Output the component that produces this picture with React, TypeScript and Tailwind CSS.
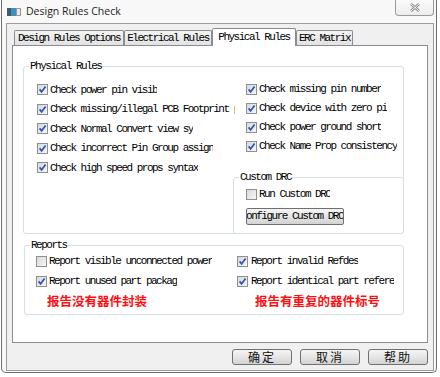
import React from "react";

const mono = "font-['Liberation_Mono','Courier_New',monospace] text-[11px] tracking-[-1.5px] text-black whitespace-nowrap";
const cjk = "font-['Noto_Sans_CJK_SC',sans-serif]";

function Box({ on }: { on?: boolean }) {
  return (
    <span className="flex h-[11px] w-[11px] shrink-0 items-center justify-center border border-[#8e8f8f] bg-white">
      <span className="flex h-[9px] w-[9px] items-center justify-center bg-gradient-to-br from-[#d6d9de] to-[#f7f7f7]">
        {on && (
          <svg width="9" height="9" viewBox="0 0 9 9">
            <path d="M1.6 4.4 L3.6 6.8 L7.6 1.4" fill="none" stroke="#2f56b0" strokeWidth="1.7" />
          </svg>
        )}
      </span>
    </span>
  );
}

function Check({ on, text, h, gap = "gap-[2px]", clip }: { on?: boolean; text: string; h: string; gap?: string; clip?: string }) {
  return (
    <div className={`flex items-center ${h} ${gap}`}>
      <Box on={on} />
      <span className={`${mono} overflow-hidden ${clip ?? ""}`}>{text}</span>
    </div>
  );
}

function Legend({ children }: { children: React.ReactNode }) {
  return (
    <span className={`-mt-[6px] ml-[5px] block h-[11px] w-fit bg-white px-[1px] leading-[11px] ${mono}`}>{children}</span>
  );
}

function Tab({ label, w, active }: { label: string; w: string; active?: boolean }) {
  if (active) {
    return (
      <div className={`${w} flex h-[18px] items-start justify-center rounded-t-[2px] border border-b-0 border-[#898c95] bg-white pt-[2px] leading-[13px] ${mono}`}>
        {label}
      </div>
    );
  }
  return (
    <div className={`${w} mb-px flex h-[15px] items-center justify-center rounded-t-[2px] border border-b-0 border-[#898c95] bg-gradient-to-b from-[#f4f4f4] to-[#e2e2e2] ${mono}`}>
      {label}
    </div>
  );
}

function Btn({ label }: { label: string }) {
  return (
    <button className={`flex h-[16px] w-[60px] items-center justify-center rounded-[3px] border border-[#707070] bg-gradient-to-b from-[#f4f4f4] via-[#e6e6e6] to-[#d2d2d2] text-[12px] leading-none tracking-[2px] text-[#111] ${cjk}`}>
      {label}
    </button>
  );
}

export default function App() {
  return (
    <div className="h-[377px] w-[440px] overflow-hidden bg-white">
      <div className="ml-px flex h-[373px] w-[436px] flex-col rounded-b-[5px] border-x border-b border-[#6f6f6f] bg-[#f8f8f8]">
        {/* title bar */}
        <div className="flex h-[23px] items-start">
          <svg className="ml-[5px] mt-[8px]" width="14" height="8" viewBox="0 0 14 8">
            <rect x="0" y="0" width="4" height="8" fill="#3f5d72" />
            <rect x="4" y="0" width="5" height="8" fill="#3d93b4" />
            <rect x="9.5" y="0.5" width="4" height="7" fill="#e6e6e6" stroke="#9a9a9a" />
          </svg>
          <span className="ml-[5px] mt-[4px] font-['Open_Sans',sans-serif] text-[10.5px] leading-[14px] text-[#1e1e1e]">
            Design Rules Check
          </span>
          <div className="ml-auto mr-[2px] flex h-[16px] w-[39px] items-center justify-center rounded-b-[4px] border border-t-0 border-[#9a9a9a] bg-gradient-to-b from-[#fbfbfb] to-[#ececec]">
            <svg width="10" height="9" viewBox="0 0 10 9">
              <path d="M1 1 L9 8 M9 1 L1 8" stroke="#8c8c8c" strokeWidth="2.6" />
              <path d="M1 1 L9 8 M9 1 L1 8" stroke="#f2f2f2" strokeWidth="1" />
            </svg>
          </div>
        </div>

        {/* client area */}
        <div className="ml-[4px] flex h-[348px] w-[428px] flex-col border border-[#9c9c9c] bg-[#f0f0f0]">
          <div className="relative z-10 -mb-px ml-[7px] mt-[4px] flex h-[18px] items-end">
            <Tab label="Design Rules Options" w="w-[110px]" />
            <Tab label="Electrical Rules" w="w-[88px]" />
            <Tab label="Physical Rules" w="w-[84px]" active />
            <Tab label="ERC Matrix" w="w-[57px]" />
          </div>

          <div className="ml-[5px] flex h-[298px] w-[416px] flex-col border border-[#898c95] bg-white">
            {/* Physical Rules */}
            <div className="ml-[10px] mt-[20px] flex h-[168px] w-[381px] flex-col rounded-[3px] border border-[#d5dfe5]">
              <Legend>Physical Rules</Legend>
              <div className="mt-[8px] flex flex-1">
                <div className="w-[222px] shrink-0 pl-[13px]">
                  <Check on text="Check power pin visib" h="h-[19.5px]" />
                  <Check on text="Check missing/illegal PCB Footprint p" h="h-[19.5px]" clip="w-[185px]" />
                  <Check on text="Check Normal Convert view sy" h="h-[19.5px]" />
                  <Check on text="Check incorrect Pin Group assign" h="h-[19.5px]" />
                  <Check on text="Check high speed props syntax" h="h-[19.5px]" />
                </div>
                <div className="flex flex-1 flex-col">
                  <Check on text="Check missing pin number" h="h-[19px]" />
                  <Check on text="Check device with zero pi" h="h-[19px]" />
                  <Check on text="Check power ground short" h="h-[19px]" />
                  <Check on text="Check Name Prop consistency" h="h-[19px]" />
                  {/* Custom DRC */}
                  <div className="-mb-px -mr-px -ml-[13px] mt-auto flex h-[57px] flex-col rounded-[3px] border border-[#d5dfe5]">
                    <Legend>Custom DRC</Legend>
                    <div className="ml-[12px] mt-[2px]">
                      <Check text="Run Custom DRC" h="h-[19px]" />
                    </div>
                    <button className={`ml-[12px] mt-[4px] flex h-[17px] w-[98px] items-center justify-end overflow-hidden rounded-[2px] border border-[#707070] bg-gradient-to-b from-[#f4f4f4] via-[#e6e6e6] to-[#d2d2d2] ${mono}`}>
                      <span className="-ml-[6px] shrink-0">Configure Custom DRC</span>
                    </button>
                  </div>
                </div>
              </div>
            </div>

            {/* Reports */}
            <div className="ml-[11px] mt-[11px] flex h-[70px] w-[380px] flex-col rounded-[3px] border border-[#d5dfe5]">
              <Legend>Reports</Legend>
              <div className="flex">
                <div className="w-[212px] pl-[11px]">
                  <Check text="Report visible unconnected power" h="h-[20px]" />
                  <Check on text="Report unused part packag" h="h-[20px]" />
                  <div className={`ml-[11px] flex h-[20px] items-center text-[12.5px] font-bold text-[#ff1010] ${cjk}`}>
                    报告没有器件封装
                  </div>
                </div>
                <div className="flex-1">
                  <Check on text="Report invalid Refdes" h="h-[20px]" gap="gap-[3px]" />
                  <Check on text="Report identical part refere" h="h-[20px]" gap="gap-[3px]" />
                  <div className={`ml-[18px] flex h-[20px] items-center text-[12.5px] font-bold text-[#ff1010] ${cjk}`}>
                    报告有重复的器件标号
                  </div>
                </div>
              </div>
            </div>
          </div>

          <div className="mr-[5px] mt-[6px] flex justify-end gap-[8px]">
            <Btn label="确定" />
            <Btn label="取消" />
            <Btn label="帮助" />
          </div>
        </div>
      </div>
    </div>
  );
}
